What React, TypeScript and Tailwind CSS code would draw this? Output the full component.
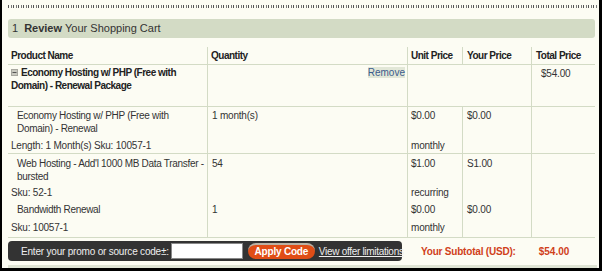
import React from "react";

const cols = "grid grid-cols-[199px_200px_55px_69px_64px]";
const line = "border-[#d3dbc5]";

const items = [
  {
    name: ["Economy Hosting w/ PHP (Free with", "Domain) - Renewal"],
    sku: "Length: 1 Month(s) Sku: 10057-1",
    qty: "1 month(s)",
    unit: "$0.00",
    term: "monthly",
    yours: "$0.00",
    main: "pt-[2px]",
    sub: "pt-[4px] pb-[1px]",
    last: "border-b",
  },
  {
    name: ["Web Hosting - Add'l 1000 MB Data Transfer -", "bursted"],
    sku: "Sku: 52-1",
    qty: "54",
    unit: "$1.00",
    term: "recurring",
    yours: "S1.00",
    main: "pt-[3px]",
    sub: "pt-[3px]",
    last: "",
  },
  {
    name: ["Bandwidth Renewal"],
    sku: "Sku: 10057-1",
    qty: "1",
    unit: "$0.00",
    term: "monthly",
    yours: "$0.00",
    main: "pt-[4px]",
    sub: "pt-[5px] pb-[3px]",
    last: "border-b",
  },
];

function CollapseIcon() {
  return (
    <svg width="7" height="7" viewBox="0 0 7 7" className="inline-block mr-[3px] mb-[1px] align-middle">
      <rect x="0.5" y="0.5" width="6" height="6" fill="#c9c9c0" stroke="#a8a8a0" />
      <line x1="1.5" y1="3.5" x2="5.5" y2="3.5" stroke="#555" strokeWidth="1" />
    </svg>
  );
}

export default function App() {
  return (
    <div className="w-[602px] h-[271px] bg-black pl-[2px] pr-[3px] pb-[3px] font-['Liberation_Sans',Arial,sans-serif] text-[#333]">
      <div className="h-full bg-[#fcfcf3] pl-[6px] pr-[2px] overflow-hidden">
        {/* bottom edge of the text line above, cut off by the frame */}
        <div className="mt-[5px] w-[589px] h-[3px] bg-[repeating-linear-gradient(90deg,#555_0_1px,transparent_1px_3px,#777_3px_4px,transparent_4px_5px)]"></div>

        {/* step header */}
        <div className="mt-[11px] w-[587px] h-[19px] rounded-[3px] bg-[#d3dbc5] flex items-center pl-[4px] text-[11px] text-[#333]">
          <span className="mr-[6px]">1</span>
          <span className="font-bold mr-[3px]">Review</span>
          <span>Your Shopping Cart</span>
        </div>

        {/* table */}
        <div className="mt-[9px] w-[587px] text-[10px] leading-[13px] whitespace-nowrap tracking-[-0.2px]">
          <div className={`${cols} h-[18px] border-b ${line} font-bold tracking-[-0.5px] text-[#222]`}>
            <div className="pl-[3px] flex items-center">Product Name</div>
            <div className={`pl-[3px] flex items-center border-l ${line}`}>Quantity</div>
            <div className={`pl-[3px] flex items-center border-l ${line}`}>Unit Price</div>
            <div className={`pl-[4px] flex items-center border-l ${line}`}>Your Price</div>
            <div className={`pl-[4px] flex items-center border-l ${line}`}>Total Price</div>
          </div>

          <div className={`${cols} h-[42px] border-b ${line}`}>
            <div className="pl-[3px] pt-[1px] font-bold tracking-[-0.5px] text-[#222]">
              <CollapseIcon />
              Economy Hosting w/ PHP (Free with
              <br />
              Domain) - Renewal Package
            </div>
            <div className={`border-l ${line} flex justify-end items-start pt-[2px] pr-[2px]`}>
              <span className="bg-[#e2e7d7] text-[#3b5b8c] leading-[11px] tracking-normal">Remove</span>
            </div>
            <div className={`border-l ${line}`}></div>
            <div></div>
            <div className={`border-l ${line} pl-[9px] pt-[2px]`}>$54.00</div>
          </div>

          {items.map((it, i) => (
            <div key={i} className={`${cols} ${it.last} ${line}`}>
              <div className={`${it.main} pl-[9px] tracking-[-0.3px]`}>
                {it.name.map((n, j) => (
                  <div key={j}>{n}</div>
                ))}
              </div>
              <div className={`${it.main} pl-[4px] border-l ${line}`}>{it.qty}</div>
              <div className={`${it.main} pl-[3px] border-l ${line}`}>{it.unit}</div>
              <div className={`${it.main} pl-[4px] border-l ${line}`}>{it.yours}</div>
              <div className={`border-l ${line}`}></div>

              <div className={`${it.sub} pl-[3px]`}>{it.sku}</div>
              <div className={`border-l ${line}`}></div>
              <div className={`${it.sub} pl-[3px] border-l ${line}`}>{it.term}</div>
              <div className={`border-l ${line}`}></div>
              <div className={`border-l ${line}`}></div>
            </div>
          ))}
        </div>

        {/* promo + subtotal */}
        <div className="mt-[3px] flex items-center w-[587px] whitespace-nowrap">
          <div className="w-[394px] h-[20px] rounded-[4px] bg-[#333333] flex items-center pl-[13px] text-[10px] text-[#eeeeee] shrink-0">
            <span className="tracking-[-0.2px]">Enter your promo or source code±:</span>
            <div className="ml-[2px] w-[72px] h-[16px] bg-white border border-[#888] shrink-0"></div>
            <div className="ml-[5px] w-[67px] h-[16px] shrink-0 rounded-full bg-[#e04d16] border-t-2 border-[#b9b2a6] flex items-center justify-center font-bold text-white text-[10px] leading-none tracking-[-0.2px]">
              Apply Code
            </div>
            <span className="ml-[4px] underline tracking-[-0.3px]">View offer limitations</span>
          </div>
          <div className="ml-[19px] font-bold text-[10px] text-[#d0401a] tracking-[-0.2px]">Your Subtotal (USD):</div>
          <div className="ml-[23px] font-bold text-[10px] text-[#d0401a]">$54.00</div>
        </div>

        <div className="mt-[2px] h-[6px] bg-[linear-gradient(180deg,#fcfcf3_0_2px,#dfe4d4_2px)]"></div>
      </div>
    </div>
  );
}
